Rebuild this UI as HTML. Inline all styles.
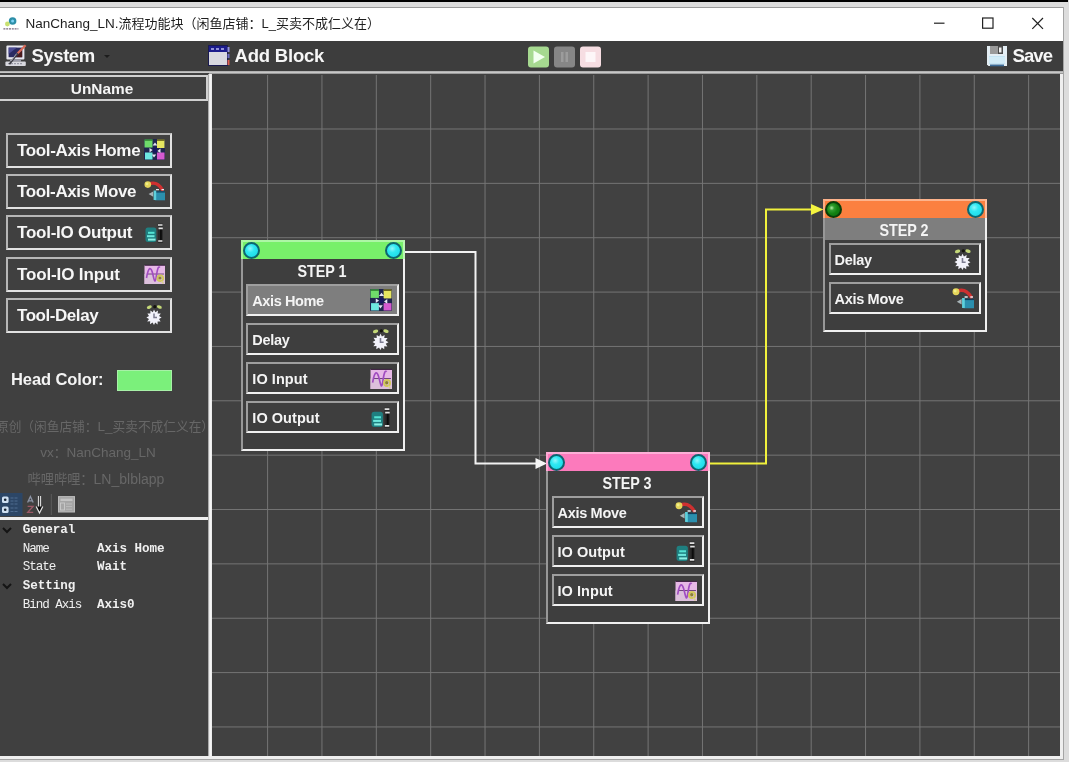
<!DOCTYPE html>
<html lang="zh">
<head>
<meta charset="utf-8">
<title>NanChang_LN.流程功能块</title>
<style>
*{box-sizing:border-box;margin:0;padding:0}
html,body{width:1069px;height:762px;overflow:hidden;background:#dcdcdc}
body{position:relative;font-family:"Liberation Sans","Noto Sans CJK SC",sans-serif;color:#f4f4f4}
.abs{position:absolute}
#topblack{left:0;top:0;width:1068px;height:2px;background:#000}
#win{filter:blur(0.5px);left:0;top:8px;width:1063px;height:751px;background:#404040;overflow:hidden}
#frame-top{left:0;top:7px;width:1064px;height:1px;background:#9a9a9a}
#frame-right{left:1063px;top:7px;width:1px;height:753px;background:#a4a4a4}
#frame-bottom{left:0;top:759px;width:1064px;height:1px;background:#a4a4a4}
#titlebar{left:0;top:0;width:1063px;height:33px;background:#fff;color:#222}
#title{left:25.5px;top:8px;font-size:13px;line-height:16px;white-space:nowrap;color:#1e1e1e}
#toolbar{left:0;top:33px;width:1063px;height:30px;background:#3d3d3d}
.tbtxt{font-weight:bold;font-size:18.5px;line-height:24px;color:#f6f6f6;white-space:nowrap;top:36px}
#sep1{left:0;top:63px;width:1063px;height:3px;background:linear-gradient(#9c9c9c,#cfcfcf 40%,#b4b4b4 75%,#6a6a6a)}
#left{left:0;top:65px;width:209px;height:683px;background:#404040}
#split{left:208px;top:66px;width:6px;height:685px;background:linear-gradient(to right,#707070 0,#e4e4e4 1px,#f6f6f6 2.4px,#ececec 3.6px,#7a7a7a 4.2px,#666 5.4px,#444 6px)}
#canvas{left:212px;top:66px;width:848px;height:682px;background-color:#414141;overflow:hidden}
#canvas-r{left:1060px;top:66px;width:3px;height:685px;background:#efefef}
#bottomline{left:0;top:748px;width:1063px;height:3px;background:#efefef}
#unname{left:-2px;top:67px;width:210px;height:26px;border:2px solid #d0d0d0;text-align:center;font-weight:bold;font-size:15.4px;line-height:24px;padding-right:2px;color:#f4f4f4}
.tool{left:6px;width:166px;height:35px;border:2px solid;border-color:#b6b6b6 #e2e2e2 #e2e2e2 #b6b6b6;font-weight:bold;font-size:17px;line-height:32px;padding-left:9px;letter-spacing:-0.35px;white-space:nowrap;color:#f6f6f6}
.tool svg,.item svg{position:absolute}
.item svg{width:22px;height:22px}
.wm{color:#676767;font-size:12.7px;line-height:18px;white-space:nowrap;text-align:center;width:208px;left:0}
.block{border:2px solid;border-color:#989898 #f0f0f0 #f0f0f0 #989898;background:#3e3e3e;width:164px}
.hdr{left:-2px;top:-2px;width:164px;height:19px;border-top:2px solid rgba(255,255,255,0.4);border-left:2px solid rgba(255,255,255,0.35);border-right:2px solid rgba(255,255,255,0.5)}
.dot{width:17px;height:17px;border-radius:50%;background:radial-gradient(circle at 40% 35%,#8ff6fb 0,#2fe8f2 35%,#14d6e6 100%);border:2px solid #0e6670}
.step{left:-1.5px;width:160px;text-align:center;font-weight:bold;font-size:16.5px;line-height:22px;color:#f4f4f4;transform:scaleX(0.87);transform-origin:50% 50%}
.item{left:4px;width:152px;height:32px;border:2px solid;border-color:#9e9e9e #f0f0f0 #f0f0f0 #9e9e9e;font-weight:bold;font-size:14.5px;line-height:31px;padding-left:3.5px;white-space:nowrap;color:#f4f4f4;background:#3e3e3e}
#grid{left:215px;top:67px;width:845px;height:681px;background-image:linear-gradient(to right,#747474 1px,transparent 1px);background-size:54.37px 54.37px;background-position:52.1px 0}
#grid2{left:212px;top:68px;width:848px;height:680px;background-image:linear-gradient(to bottom,#747474 1px,transparent 1px);background-size:54.37px 54.37px;background-position:0 52.5px}
.item.sel{background:#7e7e7e}
.dot.g{background:radial-gradient(circle at 36% 38%,#b4f0a8 0,#2f9c2f 22%,#128212 50%,#0c6e10 100%);border-color:#0a3c0a}
.wm span{font-size:13.5px}
.pg{font-family:"Liberation Mono","Noto Serif CJK SC",monospace;font-size:12.6px;line-height:16px;white-space:nowrap;color:#f0f0f0;letter-spacing:-1.06px}
.pg.b{font-weight:bold;letter-spacing:-0.06px}
</style>
</head>
<body>
<div id="topblack" class="abs"></div>
<div id="frame-top" class="abs"></div>
<div id="frame-right" class="abs"></div>
<div id="frame-bottom" class="abs"></div>
<div id="win" class="abs">
  <div id="titlebar" class="abs">
    <svg class="abs" width="18" height="16" viewBox="0 0 18 16" style="left:2px;top:8px"><circle cx="10.6" cy="5" r="3.8" fill="#2c8ea8"/><circle cx="10.6" cy="5" r="1.5" fill="#7cd0f4"/><circle cx="5.4" cy="8" r="2.4" fill="#c0dc58" opacity="0.85"/><path d="M1.4 12.8 H16.4" stroke="#7a6a80" stroke-width="1.2" stroke-dasharray="2 0.8"/></svg>
    <svg class="abs" width="120" height="20" viewBox="0 0 120 20" style="left:930px;top:5px"><path d="M4 10.2 H14.5" stroke="#222" stroke-width="1.2"/><rect x="52.6" y="5" width="10.4" height="10.2" fill="none" stroke="#222" stroke-width="1.2"/><path d="M102.3 5 L113 15.8 M113 5 L102.3 15.8" stroke="#222" stroke-width="1.2"/></svg>
    <div id="title" class="abs"><span style="font-size:13.5px">NanChang_LN.</span>流程功能块（闲鱼店铺：L_买卖不成仁义在）</div>
  </div>
  <div id="toolbar" class="abs"></div>
  <div id="sep1" class="abs"></div>
  <div id="left" class="abs"></div>
  <div id="unname" class="abs">UnName</div>
  <svg class="abs" width="23" height="23" viewBox="0 0 23 23" style="left:4px;top:36px"><rect x="2.4" y="1.4" width="18" height="14" rx="1" fill="#e6e6ee"/><rect x="4.6" y="3.6" width="13.6" height="9.6" fill="#2a2a62"/><path d="M4.6 3.6 H13 L4.6 10 Z" fill="#5454a0" opacity="0.8"/><path d="M18.2 6 V13.2 H12 Z" fill="#4a1a1c"/><rect x="6" y="15.4" width="11" height="2.2" fill="#9a9aa8"/><rect x="1.4" y="17.4" width="20.4" height="4.6" rx="1" fill="#d8d8de"/><path d="M4 19.7 H19" stroke="#8a8a98" stroke-width="1" stroke-dasharray="2 1"/><path d="M21.6 1.2 L13.5 9.6" stroke="#d86a58" stroke-width="2.2"/><path d="M13.8 9.2 L5.4 20.2" stroke="#3c3c44" stroke-width="1.8"/><path d="M12.6 9.6 L7.2 16.8" stroke="#c8c8d0" stroke-width="0.8"/></svg>
  <div class="abs tbtxt" style="left:31.5px;letter-spacing:-0.43px">System</div>
  <div class="abs" style="left:104px;top:47px;width:0;height:0;border-left:3px solid transparent;border-right:3px solid transparent;border-top:3px solid #1c1c1c"></div>
  <svg class="abs" width="22" height="22" viewBox="0 0 22 22" style="left:208px;top:37px"><rect x="0.5" y="0.5" width="19" height="20" fill="#d8d8e0" stroke="#1a1a50" stroke-width="1"/><rect x="1" y="1" width="18" height="6" fill="#1c1c8c"/><path d="M3 4 H6 M8 4 H11 M13 4 H16" stroke="#b8b8f0" stroke-width="1.5"/><rect x="19.5" y="2" width="2" height="5" fill="#9090e0"/><rect x="19.5" y="9" width="2" height="4" fill="#7070c0"/><rect x="19.5" y="15" width="2" height="5" fill="#e06050"/></svg>
  <div class="abs tbtxt" style="left:234.5px;letter-spacing:-0.2px">Add Block</div>
  <svg class="abs" width="76" height="22" viewBox="0 0 76 22" style="left:527px;top:37.5px"><rect x="1" y="0.5" width="21" height="21" rx="3" fill="#a6d990"/><path d="M6.5 4.5 L18 11 L6.5 17.5 Z" fill="#f2fff0"/><rect x="27" y="0.5" width="21" height="21" rx="3" fill="#868686"/><rect x="34" y="6" width="2.5" height="10" fill="#9c9c9c"/><rect x="38.5" y="6" width="2.5" height="10" fill="#9c9c9c"/><rect x="53" y="0.5" width="21" height="21" rx="3" fill="#f6dde2"/><rect x="58.5" y="6" width="10" height="10" fill="#fdf6f8"/></svg>
  <svg class="abs" width="22" height="22" viewBox="0 0 22 22" style="left:986px;top:37px"><path d="M1 1 H21 V21 H2.5 L1 19.5 Z" fill="#e4eef4"/><rect x="4" y="1" width="13" height="8" fill="#4a4a4a"/><rect x="4" y="1" width="8" height="8" fill="#9a9a9a"/><rect x="13" y="2.5" width="2.5" height="5" fill="#f0f0f0"/><rect x="3" y="11" width="16" height="8" fill="#c4e4f4"/><path d="M3 13 H19 M3 15 H19 M3 17 H19" stroke="#e8f6fc" stroke-width="0.8"/><rect x="4" y="19.5" width="14" height="1.8" fill="#3c6c98"/></svg>
  <div class="abs tbtxt" style="left:1012.5px;letter-spacing:-0.9px">Save</div>
  <div class="abs tool" style="top:125.0px;letter-spacing:-0.35px">Tool-Axis Home<svg class="ic" width="21" height="21" viewBox="0 0 21 21" style="left:136.4px;top:4.2px"><rect x="0" y="0" width="21" height="21" rx="1" fill="#20264e"/><rect x="0.5" y="0.5" width="8" height="8" fill="#6fdc6a"/><rect x="0.5" y="0.5" width="8" height="1.2" fill="#2a7a2a"/><rect x="13" y="0.5" width="7.5" height="8.5" fill="#e6e660"/><rect x="13" y="0.5" width="7.5" height="1.2" fill="#4a4408"/><rect x="1" y="13.5" width="7.5" height="7" fill="#6ee8e0"/><rect x="13" y="13.5" width="7.5" height="7" fill="#d55ad0"/><path d="M11 3.5 L13.4 6.6 H8.6 Z M5.5 9 L8.6 11 L5.5 13.4 Z M16.5 9.6 L13.4 12 L16.5 14 Z M10 18.5 L7.8 15.5 H12.2 Z" fill="#e4e4f4"/><rect x="9" y="8.5" width="4" height="5" fill="#161660"/></svg></div>
  <div class="abs tool" style="top:166.2px;letter-spacing:-0.38px">Tool-Axis Move<svg class="ic" width="21" height="21" viewBox="0 0 21 21" style="left:136.4px;top:4.2px"><path d="M4.5 4 Q13 0.5 18.2 9.5" fill="none" stroke="#cf3030" stroke-width="3.2" stroke-linecap="round"/><circle cx="3.8" cy="4.6" r="3.3" fill="#e4d45a"/><circle cx="3" cy="3.8" r="1.4" fill="#f0f08a"/><rect x="11" y="11.3" width="10" height="9" fill="#2b8fae"/><rect x="11" y="11.3" width="10" height="1.2" fill="#123c5a"/><rect x="9.6" y="10.5" width="2.6" height="9.5" fill="#5ed0dc"/><path d="M12 9.6 H15 M17.5 9.6 H20" stroke="#e8e8f0" stroke-width="1.4"/><path d="M4.6 14 L9.2 11.4 V16.8 Z" fill="#a8b4b8"/></svg></div>
  <div class="abs tool" style="top:207.4px;letter-spacing:-0.24px">Tool-IO Output<svg class="ic" width="21" height="21" viewBox="0 0 21 21" style="left:136.4px;top:4.2px"><rect x="1.5" y="5.5" width="10.8" height="14.5" rx="2.5" fill="#1f7f80"/><rect x="4" y="9.8" width="6.5" height="2" fill="#54e4d4"/><rect x="3" y="13.2" width="7.5" height="2" fill="#6ce8dc"/><rect x="4" y="16.6" width="7.5" height="2" fill="#8cf0e4"/><rect x="13.8" y="1.5" width="5" height="19.5" fill="#2a2a2a"/><rect x="16" y="6.5" width="1.8" height="12" fill="#0c0c0c"/><path d="M14 3 H18.5 M14.5 6.4 H18.8 M14.2 19 H18.4" stroke="#e2e2e2" stroke-width="1.6"/></svg></div>
  <div class="abs tool" style="top:248.6px;letter-spacing:-0.14px">Tool-IO Input<svg class="ic" width="21" height="21" viewBox="0 0 21 21" style="left:136.4px;top:4.2px"><rect x="0.5" y="2" width="20.5" height="19.5" fill="#e6b8e6"/><rect x="0.5" y="11" width="20.5" height="10.5" fill="#dcc0dc"/><path d="M0.5 2.3 H21" stroke="#2a1030" stroke-width="0.9"/><path d="M3 11 H20" stroke="#6a3a78" stroke-width="0.9"/><path d="M2.5 15 C4.5 3 7 3 9 12 S11.5 19 12.5 12 S14.5 3 16 4.5" fill="none" stroke="#a04cc0" stroke-width="1.6"/><circle cx="16.3" cy="15.3" r="2.9" fill="none" stroke="#d2c85a" stroke-width="1.8"/><circle cx="16" cy="15" r="1.6" fill="#8c8430"/><path d="M17.5 18 L19.5 20.5" stroke="#d8d090" stroke-width="1.5"/></svg></div>
  <div class="abs tool" style="top:289.8px;letter-spacing:-0.45px">Tool-Delay<svg class="ic" width="21" height="21" viewBox="0 0 21 21" style="left:136.4px;top:4.2px"><ellipse cx="5.3" cy="3.2" rx="2.6" ry="1.6" fill="#c4d878" transform="rotate(-20 5.3 3.2)"/><ellipse cx="15.3" cy="3" rx="2.6" ry="1.6" fill="#c4d878" transform="rotate(20 15.3 3)"/><circle cx="10.8" cy="2.7" r="1.6" fill="#14140c"/><path d="M10 5.5 L11.4 8.2 L14 6.6 L13.6 9.6 L16.8 9.6 L15 12 L17.6 13.6 L15 15 L16.6 17.6 L13.6 17.4 L13.6 20.4 L11.2 18.6 L10 21 L8.6 18.6 L6 20.2 L6.2 17.2 L3.2 17.4 L5 15 L2.4 13.4 L5 12 L3.4 9.4 L6.4 9.6 L6.4 6.6 L8.8 8.2 Z" fill="#f2f2fa"/><path d="M10 9.5 V13.6 H13" fill="none" stroke="#7c7c90" stroke-width="1.5"/></svg></div>
  <div class="abs" style="left:11px;top:360px;font-weight:bold;font-size:16.5px;line-height:22px;white-space:nowrap;color:#f4f4f4;letter-spacing:-0.1px">Head Color:</div>
  <div class="abs" style="left:117px;top:362px;width:55px;height:21px;background:#7bf07b;border:1px solid #a8f0a8"></div>
  <div class="abs wm" style="top:410px;left:-4px;width:214px">原创（闲鱼店铺：<span>L_</span>买卖不成仁义在）</div>
  <div class="abs wm" style="top:435.5px;left:-6px"><span>vx</span>：<span>NanChang_LN</span></div>
  <div class="abs wm" style="top:461.5px;left:-8px;font-size:13.2px">哔哩哔哩：<span style="font-size:14px">LN_blblapp</span></div>
  <svg class="abs" width="80" height="24" viewBox="0 0 80 24" style="left:0;top:485px"><rect x="0" y="0" width="22.5" height="23" fill="#2c4666"/><rect x="2" y="3.4" width="6.6" height="6.6" rx="1.6" fill="#cfe0f2"/><circle cx="5.2" cy="6.7" r="1.3" fill="#14202e"/><rect x="2" y="13.4" width="6.6" height="6.6" rx="1.6" fill="#cfe0f2"/><circle cx="5.2" cy="16.7" r="1.3" fill="#14202e"/><path d="M10.5 5 H18.5 M10.5 8 H18.5 M10.5 11 H18.5 M10.5 15 H18.5 M10.5 18.5 H18.5" stroke="#4f6c90" stroke-width="1.1" stroke-dasharray="3 1"/><path d="M27.6 9.6 L30.4 3.6 L33.2 9.6 M28.4 7.8 H32.4" stroke="#8c94a6" stroke-width="1.3" fill="none"/><path d="M27.6 13.4 H33 L27.8 19.4 H33.2" stroke="#9a5866" stroke-width="1.4" fill="none"/><path d="M38.4 3 V15.5 M40.6 3 V15.5" stroke="#e8e8e8" stroke-width="1"/><path d="M36.2 13.6 L39.5 20 L42.8 13.6" fill="#0c0c0c" stroke="#e8e8e8" stroke-width="1.2"/><path d="M51.3 1 V22" stroke="#5c5c5c" stroke-width="1"/><rect x="58.5" y="3.6" width="16" height="15.4" fill="#a6a6a6" stroke="#bcbcbc" stroke-width="1"/><rect x="60.5" y="5.6" width="12" height="2.4" fill="#c4c4c4"/><rect x="60.5" y="10" width="4" height="7" fill="none" stroke="#cacaca" stroke-width="0.9"/><path d="M66 11 H72 M66 13.6 H72 M66 16.2 H72" stroke="#c0c0c0" stroke-width="0.9"/></svg>
  <div class="abs" style="left:0;top:509px;width:209px;height:3px;background:#eeeeee"></div>
  <svg class="abs" width="10" height="7" viewBox="0 0 10 7" style="left:2px;top:518.5px"><path d="M1 1 L5 5 L9 1" fill="none" stroke="#141414" stroke-width="2"/></svg>
  <div class="abs pg b" style="left:22.7px;top:514px">General</div>
  <div class="abs pg" style="left:22.7px;top:533px">Name</div>
  <div class="abs pg b" style="left:97px;top:533px">Axis Home</div>
  <div class="abs pg" style="left:22.7px;top:551px">State</div>
  <div class="abs pg b" style="left:97px;top:551px">Wait</div>
  <svg class="abs" width="10" height="7" viewBox="0 0 10 7" style="left:2px;top:574.5px"><path d="M1 1 L5 5 L9 1" fill="none" stroke="#141414" stroke-width="2"/></svg>
  <div class="abs pg b" style="left:22.7px;top:570px">Setting</div>
  <div class="abs pg" style="left:22.7px;top:589px">Bind Axis</div>
  <div class="abs pg b" style="left:97px;top:589px">Axis0</div>
  <div id="split" class="abs"></div>
  <div id="canvas" class="abs"></div>
  <div id="grid" class="abs"></div>
  <div id="grid2" class="abs"></div>
  <svg class="abs" width="848" height="682" viewBox="212 74 848 682" style="left:212px;top:66px"><path d="M404 252 H475.5 V463.5 H537" fill="none" stroke="#f2f2f2" stroke-width="2"/><path d="M535.5 458 L547 463.5 L535.5 469 Z" fill="#f6f6f6"/><path d="M709 463.5 H766 V209.5 H812" fill="none" stroke="#f0f03c" stroke-width="2"/><path d="M811 204 L823.5 209.5 L811 215 Z" fill="#f4f440"/></svg>
  <div class="abs block" style="left:241px;top:232px;height:211px">
    <div class="abs hdr" style="background:#78f06a"></div>
    <div class="abs dot" style="left:0px;top:0px"></div>
    <div class="abs dot" style="left:141.5px;top:0px"></div>
    <div class="abs step" style="top:17.5px">STEP 1</div>
    <div class="abs item sel" style="left:3px;width:153px;padding-left:4.3px;top:42px;letter-spacing:-0.41px">Axis Home<svg class="ic" width="21" height="21" viewBox="0 0 21 21" style="left:122.4px;top:2.8px"><rect x="0" y="0" width="21" height="21" rx="1" fill="#20264e"/><rect x="0.5" y="0.5" width="8" height="8" fill="#6fdc6a"/><rect x="0.5" y="0.5" width="8" height="1.2" fill="#2a7a2a"/><rect x="13" y="0.5" width="7.5" height="8.5" fill="#e6e660"/><rect x="13" y="0.5" width="7.5" height="1.2" fill="#4a4408"/><rect x="1" y="13.5" width="7.5" height="7" fill="#6ee8e0"/><rect x="13" y="13.5" width="7.5" height="7" fill="#d55ad0"/><path d="M11 3.5 L13.4 6.6 H8.6 Z M5.5 9 L8.6 11 L5.5 13.4 Z M16.5 9.6 L13.4 12 L16.5 14 Z M10 18.5 L7.8 15.5 H12.2 Z" fill="#e4e4f4"/><rect x="9" y="8.5" width="4" height="5" fill="#161660"/></svg></div>
    <div class="abs item" style="left:3px;width:153px;padding-left:4.3px;top:81px;letter-spacing:-0.28px">Delay<svg class="ic" width="21" height="21" viewBox="0 0 21 21" style="left:122.4px;top:2.8px"><ellipse cx="5.3" cy="3.2" rx="2.6" ry="1.6" fill="#c4d878" transform="rotate(-20 5.3 3.2)"/><ellipse cx="15.3" cy="3" rx="2.6" ry="1.6" fill="#c4d878" transform="rotate(20 15.3 3)"/><circle cx="10.8" cy="2.7" r="1.6" fill="#14140c"/><path d="M10 5.5 L11.4 8.2 L14 6.6 L13.6 9.6 L16.8 9.6 L15 12 L17.6 13.6 L15 15 L16.6 17.6 L13.6 17.4 L13.6 20.4 L11.2 18.6 L10 21 L8.6 18.6 L6 20.2 L6.2 17.2 L3.2 17.4 L5 15 L2.4 13.4 L5 12 L3.4 9.4 L6.4 9.6 L6.4 6.6 L8.8 8.2 Z" fill="#f2f2fa"/><path d="M10 9.5 V13.6 H13" fill="none" stroke="#7c7c90" stroke-width="1.5"/></svg></div>
    <div class="abs item" style="left:3px;width:153px;padding-left:4.3px;top:120px;letter-spacing:0.06px">IO Input<svg class="ic" width="21" height="21" viewBox="0 0 21 21" style="left:122.4px;top:2.8px"><rect x="0.5" y="2" width="20.5" height="19.5" fill="#e6b8e6"/><rect x="0.5" y="11" width="20.5" height="10.5" fill="#dcc0dc"/><path d="M0.5 2.3 H21" stroke="#2a1030" stroke-width="0.9"/><path d="M3 11 H20" stroke="#6a3a78" stroke-width="0.9"/><path d="M2.5 15 C4.5 3 7 3 9 12 S11.5 19 12.5 12 S14.5 3 16 4.5" fill="none" stroke="#a04cc0" stroke-width="1.6"/><circle cx="16.3" cy="15.3" r="2.9" fill="none" stroke="#d2c85a" stroke-width="1.8"/><circle cx="16" cy="15" r="1.6" fill="#8c8430"/><path d="M17.5 18 L19.5 20.5" stroke="#d8d090" stroke-width="1.5"/></svg></div>
    <div class="abs item" style="left:3px;width:153px;padding-left:4.3px;top:159px;letter-spacing:0.05px">IO Output<svg class="ic" width="21" height="21" viewBox="0 0 21 21" style="left:122.4px;top:2.8px"><rect x="1.5" y="5.5" width="10.8" height="14.5" rx="2.5" fill="#1f7f80"/><rect x="4" y="9.8" width="6.5" height="2" fill="#54e4d4"/><rect x="3" y="13.2" width="7.5" height="2" fill="#6ce8dc"/><rect x="4" y="16.6" width="7.5" height="2" fill="#8cf0e4"/><rect x="13.8" y="1.5" width="5" height="19.5" fill="#2a2a2a"/><rect x="16" y="6.5" width="1.8" height="12" fill="#0c0c0c"/><path d="M14 3 H18.5 M14.5 6.4 H18.8 M14.2 19 H18.4" stroke="#e2e2e2" stroke-width="1.6"/></svg></div>
  </div>
  <div class="abs block" style="left:546px;top:444px;height:172px">
    <div class="abs hdr" style="background:#fc7abc"></div>
    <div class="abs dot" style="left:0px;top:0px"></div>
    <div class="abs dot" style="left:141.5px;top:0px"></div>
    <div class="abs step" style="top:17.5px">STEP 3</div>
    <div class="abs item" style="top:42px;letter-spacing:-0.31px">Axis Move<svg class="ic" width="21" height="21" viewBox="0 0 21 21" style="left:121.4px;top:2.8px"><path d="M4.5 4 Q13 0.5 18.2 9.5" fill="none" stroke="#cf3030" stroke-width="3.2" stroke-linecap="round"/><circle cx="3.8" cy="4.6" r="3.3" fill="#e4d45a"/><circle cx="3" cy="3.8" r="1.4" fill="#f0f08a"/><rect x="11" y="11.3" width="10" height="9" fill="#2b8fae"/><rect x="11" y="11.3" width="10" height="1.2" fill="#123c5a"/><rect x="9.6" y="10.5" width="2.6" height="9.5" fill="#5ed0dc"/><path d="M12 9.6 H15 M17.5 9.6 H20" stroke="#e8e8f0" stroke-width="1.4"/><path d="M4.6 14 L9.2 11.4 V16.8 Z" fill="#a8b4b8"/></svg></div>
    <div class="abs item" style="top:81px;letter-spacing:0.05px">IO Output<svg class="ic" width="21" height="21" viewBox="0 0 21 21" style="left:121.4px;top:2.8px"><rect x="1.5" y="5.5" width="10.8" height="14.5" rx="2.5" fill="#1f7f80"/><rect x="4" y="9.8" width="6.5" height="2" fill="#54e4d4"/><rect x="3" y="13.2" width="7.5" height="2" fill="#6ce8dc"/><rect x="4" y="16.6" width="7.5" height="2" fill="#8cf0e4"/><rect x="13.8" y="1.5" width="5" height="19.5" fill="#2a2a2a"/><rect x="16" y="6.5" width="1.8" height="12" fill="#0c0c0c"/><path d="M14 3 H18.5 M14.5 6.4 H18.8 M14.2 19 H18.4" stroke="#e2e2e2" stroke-width="1.6"/></svg></div>
    <div class="abs item" style="top:120px;letter-spacing:0.06px">IO Input<svg class="ic" width="21" height="21" viewBox="0 0 21 21" style="left:121.4px;top:2.8px"><rect x="0.5" y="2" width="20.5" height="19.5" fill="#e6b8e6"/><rect x="0.5" y="11" width="20.5" height="10.5" fill="#dcc0dc"/><path d="M0.5 2.3 H21" stroke="#2a1030" stroke-width="0.9"/><path d="M3 11 H20" stroke="#6a3a78" stroke-width="0.9"/><path d="M2.5 15 C4.5 3 7 3 9 12 S11.5 19 12.5 12 S14.5 3 16 4.5" fill="none" stroke="#a04cc0" stroke-width="1.6"/><circle cx="16.3" cy="15.3" r="2.9" fill="none" stroke="#d2c85a" stroke-width="1.8"/><circle cx="16" cy="15" r="1.6" fill="#8c8430"/><path d="M17.5 18 L19.5 20.5" stroke="#d8d090" stroke-width="1.5"/></svg></div>
  </div>
  <div class="abs block" style="left:823px;top:191px;height:133px">
    <div class="abs hdr" style="background:#fb8040"></div>
    <div class="abs" style="left:0;top:17px;width:160px;height:22px;background:#7e7e7e"></div>
    <div class="abs dot g" style="left:0px;top:0px"></div>
    <div class="abs dot" style="left:141.5px;top:0px"></div>
    <div class="abs step" style="top:17.5px">STEP 2</div>
    <div class="abs item" style="top:42px;letter-spacing:-0.28px">Delay<svg class="ic" width="21" height="21" viewBox="0 0 21 21" style="left:121.4px;top:2.8px"><ellipse cx="5.3" cy="3.2" rx="2.6" ry="1.6" fill="#c4d878" transform="rotate(-20 5.3 3.2)"/><ellipse cx="15.3" cy="3" rx="2.6" ry="1.6" fill="#c4d878" transform="rotate(20 15.3 3)"/><circle cx="10.8" cy="2.7" r="1.6" fill="#14140c"/><path d="M10 5.5 L11.4 8.2 L14 6.6 L13.6 9.6 L16.8 9.6 L15 12 L17.6 13.6 L15 15 L16.6 17.6 L13.6 17.4 L13.6 20.4 L11.2 18.6 L10 21 L8.6 18.6 L6 20.2 L6.2 17.2 L3.2 17.4 L5 15 L2.4 13.4 L5 12 L3.4 9.4 L6.4 9.6 L6.4 6.6 L8.8 8.2 Z" fill="#f2f2fa"/><path d="M10 9.5 V13.6 H13" fill="none" stroke="#7c7c90" stroke-width="1.5"/></svg></div>
    <div class="abs item" style="top:81px;letter-spacing:-0.31px">Axis Move<svg class="ic" width="21" height="21" viewBox="0 0 21 21" style="left:121.4px;top:2.8px"><path d="M4.5 4 Q13 0.5 18.2 9.5" fill="none" stroke="#cf3030" stroke-width="3.2" stroke-linecap="round"/><circle cx="3.8" cy="4.6" r="3.3" fill="#e4d45a"/><circle cx="3" cy="3.8" r="1.4" fill="#f0f08a"/><rect x="11" y="11.3" width="10" height="9" fill="#2b8fae"/><rect x="11" y="11.3" width="10" height="1.2" fill="#123c5a"/><rect x="9.6" y="10.5" width="2.6" height="9.5" fill="#5ed0dc"/><path d="M12 9.6 H15 M17.5 9.6 H20" stroke="#e8e8f0" stroke-width="1.4"/><path d="M4.6 14 L9.2 11.4 V16.8 Z" fill="#a8b4b8"/></svg></div>
  </div>
  <div id="canvas-r" class="abs"></div>
  <div id="bottomline" class="abs"></div>
</div>
</body>
</html>
